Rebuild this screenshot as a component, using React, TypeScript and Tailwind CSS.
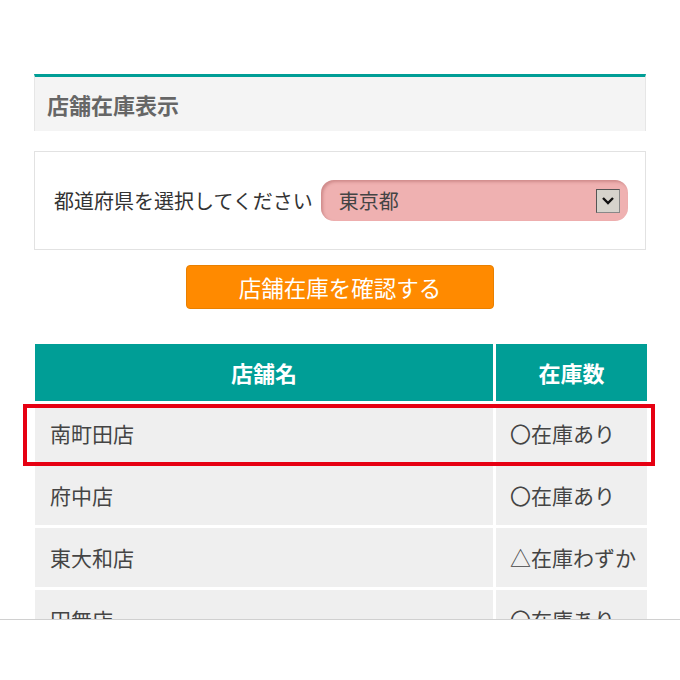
import React from 'react';

interface StoreRow {
  name: string;
  stock: string;
}

const rows: StoreRow[] = [
  { name: '南町田店', stock: '〇在庫あり' },
  { name: '府中店', stock: '〇在庫あり' },
  { name: '東大和店', stock: '△在庫わずか' },
  { name: '田無店', stock: '〇在庫あり' },
];

const App: React.FC = () => {
  return (
    <div className="relative w-[680px] h-[680px] overflow-hidden bg-white font-['Noto_Sans_CJK_JP','Noto_Sans',sans-serif] text-[#444]">
      <div className="pt-[74px] pl-[34px] pr-[34px]">
        {/* 見出し */}
        <div className="border-t-[3px] border-[#009e96] bg-[#f4f4f4] border-x border-x-[#e6e6e6] h-[57px] flex items-center pl-[12px]">
          <h2 className="text-[22px] font-bold text-[#666] leading-none">店舗在庫表示</h2>
        </div>

        {/* 都道府県選択 */}
        <div className="mt-[20px] h-[99px] border border-[#e2e2e2] flex items-center pl-[19px] pr-[17px] gap-[8px]">
          <span className="text-[20px] text-[#333] whitespace-nowrap">都道府県を選択してください</span>
          <div className="flex-1 h-[41px] rounded-[13px] bg-[#efb1b1] shadow-[inset_2px_2px_3px_rgba(150,70,70,0.35)] flex items-center pl-[18px] pr-[8px]">
            <span className="flex-1 text-[20px] text-[#444]">東京都</span>
            <div className="w-[24px] h-[24px] bg-[#d6d3cc] border border-[#555] border-r-[#888] border-b-[#888] flex items-center justify-center">
              <svg width="14" height="10" viewBox="0 0 14 10">
                <path d="M2 2 L7 7 L12 2" fill="none" stroke="#111" strokeWidth="2.4" />
              </svg>
            </div>
          </div>
        </div>

        {/* 確認ボタン */}
        <div className="mt-[15px] flex justify-center">
          <button className="w-[308px] h-[44px] rounded-[4px] bg-[#ff8a00] border border-[#e98000] text-white text-[22.5px] leading-none">
            店舗在庫を確認する
          </button>
        </div>

        {/* 在庫テーブル */}
        <div className="mt-[35px] ml-[1px] grid grid-cols-[458px_151px] gap-[3px]">
          <div className="h-[57px] bg-[#009e96] flex items-center justify-center text-white font-bold text-[22px]">店舗名</div>
          <div className="h-[57px] bg-[#009e96] flex items-center justify-center text-white font-bold text-[22px]">在庫数</div>
          {rows.map((row) => (
            <React.Fragment key={row.name}>
              <div className="h-[59px] bg-[#efefef] flex items-center pl-[15px] text-[21px] text-[#444]">{row.name}</div>
              <div className="h-[59px] bg-[#efefef] flex items-center pl-[14px] text-[21px] text-[#444] whitespace-nowrap">{row.stock}</div>
            </React.Fragment>
          ))}
        </div>
      </div>

      {/* 強調枠 */}
      <div className="absolute left-[23px] top-[404px] w-[632px] h-[62px] border-[4px] border-[#e60012]" />

      {/* 下部バー */}
      <div className="absolute left-0 right-0 top-[619px] bottom-0 bg-white border-t border-[#d0d0d0]" />
    </div>
  );
};

export default App;
